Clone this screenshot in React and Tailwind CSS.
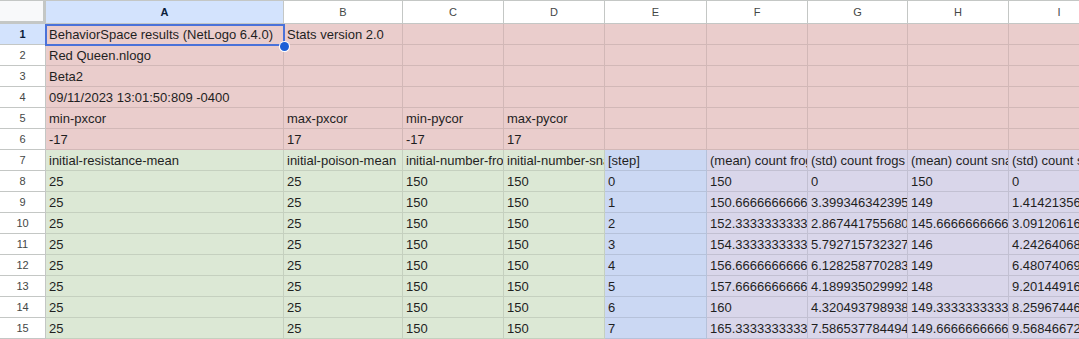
import React from 'react';

// Hoja de resultados BehaviorSpace (vista tipo Google Sheets)
const COLS = [
  { key: 'A', w: 'w-[238px]' },
  { key: 'B', w: 'w-[119px]' },
  { key: 'C', w: 'w-[101px]' },
  { key: 'D', w: 'w-[101px]' },
  { key: 'E', w: 'w-[102px]' },
  { key: 'F', w: 'w-[101px]' },
  { key: 'G', w: 'w-[100px]' },
  { key: 'H', w: 'w-[101px]' },
  { key: 'I', w: 'w-[101px]' },
];

const PINK = 'bg-[#eacdcc]';
const GREEN = 'bg-[#dce8d5]';
const BLUE = 'bg-[#cbd8f3]';
const LAV = 'bg-[#d9d6ea]';

const META = [
  ['BehaviorSpace results (NetLogo 6.4.0)', 'Stats version 2.0'],
  ['Red Queen.nlogo'],
  ['Beta2'],
  ['09/11/2023 13:01:50:809 -0400'],
  ['min-pxcor', 'max-pxcor', 'min-pycor', 'max-pycor'],
  ['-17', '17', '-17', '17'],
];

const HEAD = [
  'initial-resistance-mean',
  'initial-poison-mean',
  'initial-number-frogs',
  'initial-number-snakes',
  '[step]',
  '(mean) count frogs',
  '(std) count frogs',
  '(mean) count snakes',
  '(std) count snakes',
];

const DATA = [
  ['0', '150', '0', '150', '0'],
  ['1', '150.666666666667', '3.39934634239519', '149', '1.4142135623731'],
  ['2', '152.333333333333', '2.86744175568087', '145.666666666667', '3.09120616516523'],
  ['3', '154.333333333333', '5.79271573232714', '146', '4.24264068711928'],
  ['4', '156.666666666667', '6.12825877028304', '149', '6.48074069840786'],
  ['5', '157.666666666667', '4.18993502999204', '148', '9.20144916122812'],
  ['6', '160', '4.32049379893857', '149.333333333333', '8.25967446227466'],
  ['7', '165.333333333333', '7.58653778449410', '149.666666666667', '9.56846672151937'],
];

function buildRows() {
  const rows = META.map((vals) =>
    COLS.map((_, i) => ({ text: vals[i] || '', bg: PINK }))
  );
  rows.push(
    COLS.map((_, i) => ({
      text: HEAD[i],
      bg: i < 4 ? GREEN : i === 4 ? BLUE : LAV,
    }))
  );
  DATA.forEach(([step, ...rest]) => {
    const vals = ['25', '25', '150', '150', step, ...rest];
    rows.push(
      COLS.map((_, i) => ({
        text: vals[i],
        bg: i < 4 ? GREEN : i === 4 ? BLUE : LAV,
      }))
    );
  });
  return rows;
}

export default function App() {
  const rows = buildRows();

  return (
    <div className="relative h-[339px] w-[1079px] overflow-hidden bg-white font-['Liberation_Sans',Arial,sans-serif]">
      {/* cabecera de columnas */}
      <div className="flex h-[24px] border-t border-[#c4c7c5]">
        <div className="w-[46px] shrink-0 bg-[#f8f9fa] border-r-[3px] border-b-[3px] border-[#c4c7c5]" />
        {COLS.map((c, i) => (
          <div
            key={c.key}
            className={`${c.w} shrink-0 flex items-center justify-center border-r border-b border-[#c4c7c5] text-[11px] ${
              i === 0 ? 'bg-[#d3e3fd] font-bold text-[#0b1d3a]' : 'bg-white text-[#444746]'
            }`}
          >
            {c.key}
          </div>
        ))}
      </div>

      {rows.map((row, r) => (
        <div key={r} className="flex h-[21px]">
          <div
            className={`w-[46px] shrink-0 flex items-center justify-center border-r border-b border-[#c4c7c5] text-[11px] ${
              r === 0 ? 'bg-[#d3e3fd] font-bold text-[#0b1d3a]' : 'bg-white text-[#444746]'
            }`}
          >
            {r + 1}
          </div>
          {row.map((cell, i) => (
            <div
              key={i}
              className={`${COLS[i].w} shrink-0 ${cell.bg} border-r border-b border-black/10 overflow-hidden whitespace-nowrap px-[3px] pt-[1px] text-[13px] leading-[20px] text-[#1f1f1f]`}
            >
              {cell.text}
            </div>
          ))}
        </div>
      ))}

      {/* selección de A1 */}
      <div className="absolute left-[45px] top-[24px] h-[22px] w-[240px] border-2 border-[#4a72d9]" />
      <div className="absolute left-[280px] top-[42px] h-[9px] w-[9px] rounded-full bg-[#1b5fd6] ring-1 ring-white" />
    </div>
  );
}
